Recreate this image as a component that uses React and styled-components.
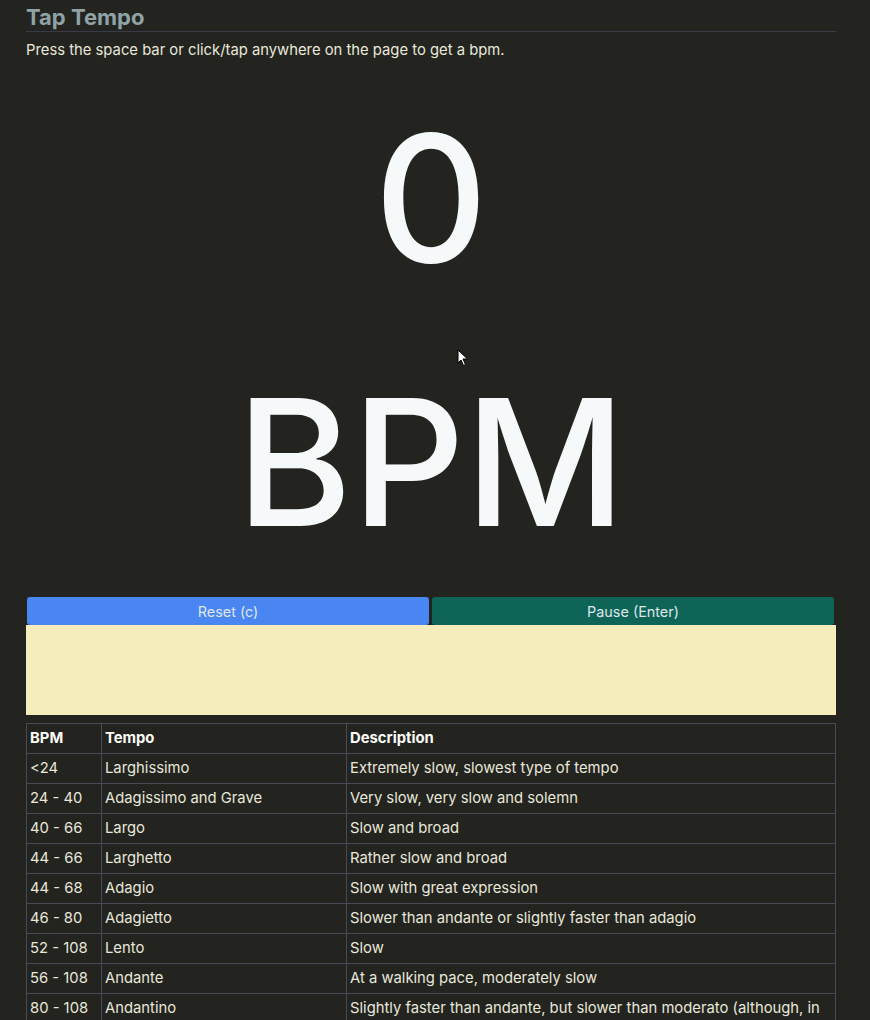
import React from 'react';
import styled, { createGlobalStyle } from 'styled-components';

const TEMPOS = [
  ['<24', 'Larghissimo', 'Extremely slow, slowest type of tempo'],
  ['24 - 40', 'Adagissimo and Grave', 'Very slow, very slow and solemn'],
  ['40 - 66', 'Largo', 'Slow and broad'],
  ['44 - 66', 'Larghetto', 'Rather slow and broad'],
  ['44 - 68', 'Adagio', 'Slow with great expression'],
  ['46 - 80', 'Adagietto', 'Slower than andante or slightly faster than adagio'],
  ['52 - 108', 'Lento', 'Slow'],
  ['56 - 108', 'Andante', 'At a walking pace, moderately slow'],
  ['80 - 108', 'Andantino', 'Slightly faster than andante, but slower than moderato (although, in some cases, it can be taken to mean slightly slower than andante)'],
  ['108 - 120', 'Moderato', 'At a moderate speed'],
  ['112 - 120', 'Allegretto', 'Moderately fast'],
];

const GlobalStyle = createGlobalStyle`
  html, body {
    margin: 0;
    background: #232320;
  }
  body {
    font-family: Inter, "Noto Sans", sans-serif;
    color: #e8e8da;
  }
`;

const Page = styled.main`
  position: relative;
  width: 810px;
  margin-left: 26px;
`;

const Title = styled.h1`
  margin: 0;
  padding-top: 4px;
  font-size: 22px;
  line-height: 27px;
  font-weight: 700;
  color: #8fa3a7;
  border-bottom: 1px solid #3a3b48;
`;

const Hint = styled.p`
  margin: 8px 0 0;
  font-size: 14.8px;
  line-height: 20px;
`;

const Display = styled.div`
  margin-top: 6px;
  text-align: center;
  font-size: 176px;
  line-height: 264px;
  font-weight: 500;
  font-variation-settings: 'opsz' 14;
  color: #f6f9f9;
`;

const Line = styled.div``;

const Buttons = styled.div`
  display: flex;
  gap: 3px;
  margin-top: 3px;
  padding: 0 2px 0 1px;
`;

const Button = styled.button`
  flex: 1;
  height: 28px;
  border: none;
  border-radius: 3px;
  background: ${({ $tone }) => ($tone === 'teal' ? '#0e6557' : '#4a86f2')};
  color: #dfe6ea;
  font-family: Inter, "Noto Sans", sans-serif;
  font-size: 14.4px;
  padding: 0;
`;

const Notes = styled.div`
  height: 90px;
  background: #f6edbd;
`;

const Table = styled.table`
  margin-top: 8px;
  width: 100%;
  border-collapse: collapse;
  table-layout: fixed;
  font-size: 14.8px;
  line-height: 21px;
`;

const Cell = styled.td`
  border: 1px solid #4a4955;
  padding: 4px 4px 4px 3px;
  vertical-align: top;
  text-align: left;
`;

const Head = styled(Cell).attrs({ as: 'th' })`
  font-weight: 700;
  color: #fbfbf5;
`;

const Cursor = styled.svg`
  position: absolute;
  left: 431px;
  top: 349px;
`;

export default function App() {
  return (
    <>
      <GlobalStyle />
      <Page>
        <Title>Tap Tempo</Title>
        <Hint>Press the space bar or click/tap anywhere on the page to get a bpm.</Hint>
        <Display>
          <Line>0</Line>
          <Line>BPM</Line>
        </Display>
        <Cursor width="12" height="18" viewBox="0 0 12 18">
          <path d="M1 1 L1 14 L4 11 L6.5 16.5 L8.5 15.5 L6 10 L10.5 10 Z" fill="#fff" stroke="#000" strokeWidth="1" />
        </Cursor>
        <Buttons>
          <Button>Reset (c)</Button>
          <Button $tone="teal">Pause (Enter)</Button>
        </Buttons>
        <Notes />
        <Table>
          <colgroup>
            <col style={{ width: 75 }} />
            <col style={{ width: 245 }} />
            <col />
          </colgroup>
          <thead>
            <tr>
              <Head>BPM</Head>
              <Head>Tempo</Head>
              <Head>Description</Head>
            </tr>
          </thead>
          <tbody>
            {TEMPOS.map(([bpm, tempo, desc]) => (
              <tr key={tempo}>
                <Cell>{bpm}</Cell>
                <Cell>{tempo}</Cell>
                <Cell>{desc}</Cell>
              </tr>
            ))}
          </tbody>
        </Table>
      </Page>
    </>
  );
}
